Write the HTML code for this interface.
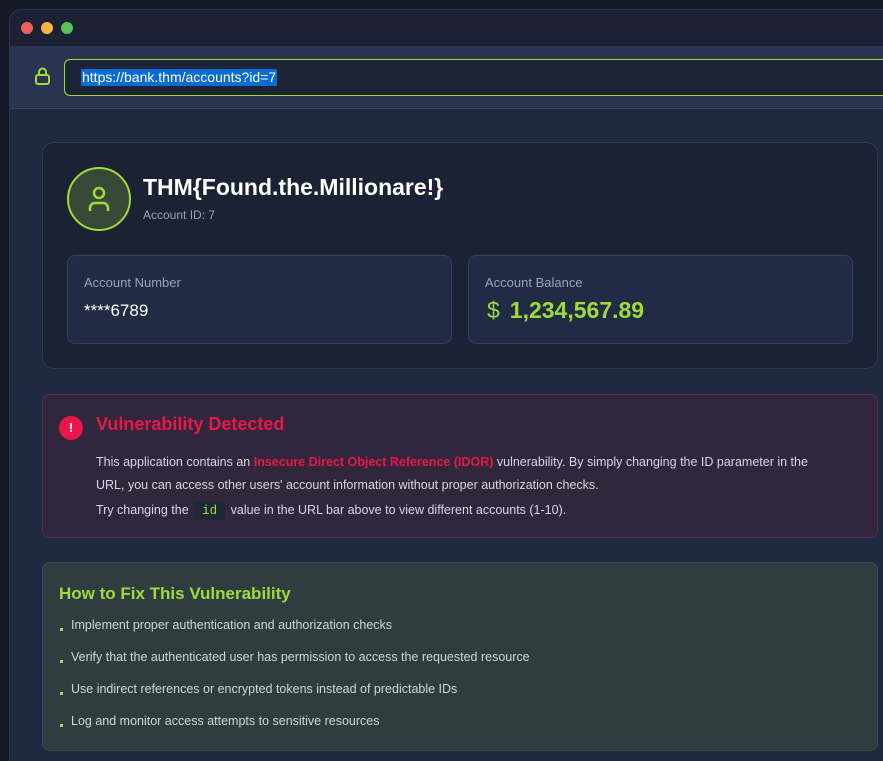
<!DOCTYPE html>
<html><head><style>
*{box-sizing:border-box;margin:0;padding:0}
html{width:883px;height:761px;overflow:hidden}
body{width:883px;height:761px;background:#141925;font-family:"Liberation Sans",sans-serif;overflow:hidden;position:relative}
.win{position:absolute;left:9px;top:9px;width:900px;height:780px;border-radius:12px;background:#1f2a40;border:1px solid #2c3548;overflow:hidden}
.tb{height:36px;background:#1b2133;position:relative}
.dot{position:absolute;top:12px;width:12px;height:12px;border-radius:50%}
.ub{height:63px;background:#283450;border-bottom:1px solid #3a4660;position:relative}
.url{position:absolute;left:54px;top:13px;width:860px;height:37px;border:1.5px solid #9fdc3a;border-radius:6px;background:#1d2436}
.url span{position:absolute;left:16px;top:9px;background:#0a6bd3;color:#fff;font-size:14px;line-height:17px;padding:0 1px}
.card{position:absolute;left:32px;top:132px;width:836px;height:227px;background:#1b2233;border:1px solid #2f3a4f;border-radius:12px}
.av{position:absolute;left:24px;top:24px;width:64px;height:64px;border-radius:50%;border:2.5px solid #9fdc3a;background:#374a37}
.box{position:absolute;top:112px;height:89px;background:#212c44;border:1px solid #36425a;border-radius:8px}
.lbl{position:absolute;left:16px;top:19px;color:#9aa3b5;font-size:13px}
.vuln{position:absolute;left:32px;top:384px;width:836px;height:144px;background:#32263d;border:1px solid #5a2a4a;border-radius:8px}
.fix{position:absolute;left:32px;top:552px;width:836px;height:189px;background:#2f3d41;border:1px solid #3e4c4e;border-radius:8px}
p{color:#d5d8e0;font-size:12.5px}
li{list-style:none;color:#d0d6d8;font-size:12.5px;position:absolute;left:28px}
li:before{content:"";position:absolute;left:-11px;top:10px;width:3px;height:3px;background:#9fdc3a}
</style></head><body>
<div class="win">
<div class="tb"><div class="dot" style="left:11px;background:#ee5f5b"></div><div class="dot" style="left:31px;background:#f4b544"></div><div class="dot" style="left:51px;background:#5cc15a"></div></div>
<div class="ub">
<svg style="position:absolute;left:24px;top:20px" width="18" height="20" viewBox="0 0 18 20" fill="none" stroke="#9fdc3a" stroke-width="2"><rect x="2" y="9" width="13" height="9" rx="2"/><path d="M5 9V6a3.5 3.5 0 0 1 7 0v3"/></svg>
<div class="url"><span>https://bank.thm/accounts?id=7</span></div>
</div>
<div class="card">
<div class="av"><svg style="position:absolute;left:18px;top:16px" width="24" height="28" viewBox="0 0 24 28" fill="none" stroke="#9fdc3a" stroke-width="2.5"><circle cx="12" cy="8" r="5"/><path d="M3 26v-3a5 5 0 0 1 5-5h8a5 5 0 0 1 5 5v3"/></svg></div>
<div style="position:absolute;left:100px;top:31px;color:#fff;font-size:23px;font-weight:bold">THM{Found.the.Millionare!}</div>
<div style="position:absolute;left:100px;top:65px;color:#9aa3b5;font-size:12px">Account ID: 7</div>
<div class="box" style="left:24px;width:385px"><div class="lbl">Account Number</div><div style="position:absolute;left:16px;top:45px;color:#fff;font-size:17px">****6789</div></div>
<div class="box" style="left:425px;width:385px"><div class="lbl">Account Balance</div><div style="position:absolute;left:18px;top:41px;color:#9fdc3a;font-size:23px;font-weight:bold"><span style="font-weight:normal;margin-right:10px">$</span>1,234,567.89</div></div>
</div>
<div class="vuln">
<div style="position:absolute;left:16px;top:21px;width:24px;height:24px;border-radius:50%;background:#e8174a;color:#fff;font-size:13px;font-weight:bold;text-align:center;line-height:24px">!</div>
<div style="position:absolute;left:53px;top:19px;color:#e8174a;font-size:18px;font-weight:bold">Vulnerability Detected</div>
<p style="position:absolute;left:53px;top:56px;width:770px;line-height:23px">This application contains an <b style="color:#e8174a">Insecure Direct Object Reference (IDOR)</b> vulnerability. By simply changing the ID parameter in the<br>URL, you can access other users' account information without proper authorization checks.</p>
<p style="position:absolute;left:53px;top:108px">Try changing the <code style="background:#1e2835;color:#9fdc3a;padding:2px 8px;font-family:'Liberation Mono',monospace;margin:0 2px">id</code> value in the URL bar above to view different accounts (1-10).</p>
</div>
<div class="fix">
<div style="position:absolute;left:16px;top:21px;color:#9fdc3a;font-size:17px;font-weight:bold">How to Fix This Vulnerability</div>
<ul>
<li style="top:55px">Implement proper authentication and authorization checks</li>
<li style="top:87px">Verify that the authenticated user has permission to access the requested resource</li>
<li style="top:119px">Use indirect references or encrypted tokens instead of predictable IDs</li>
<li style="top:151px">Log and monitor access attempts to sensitive resources</li>
</ul>
</div>
</div>
</body></html>
